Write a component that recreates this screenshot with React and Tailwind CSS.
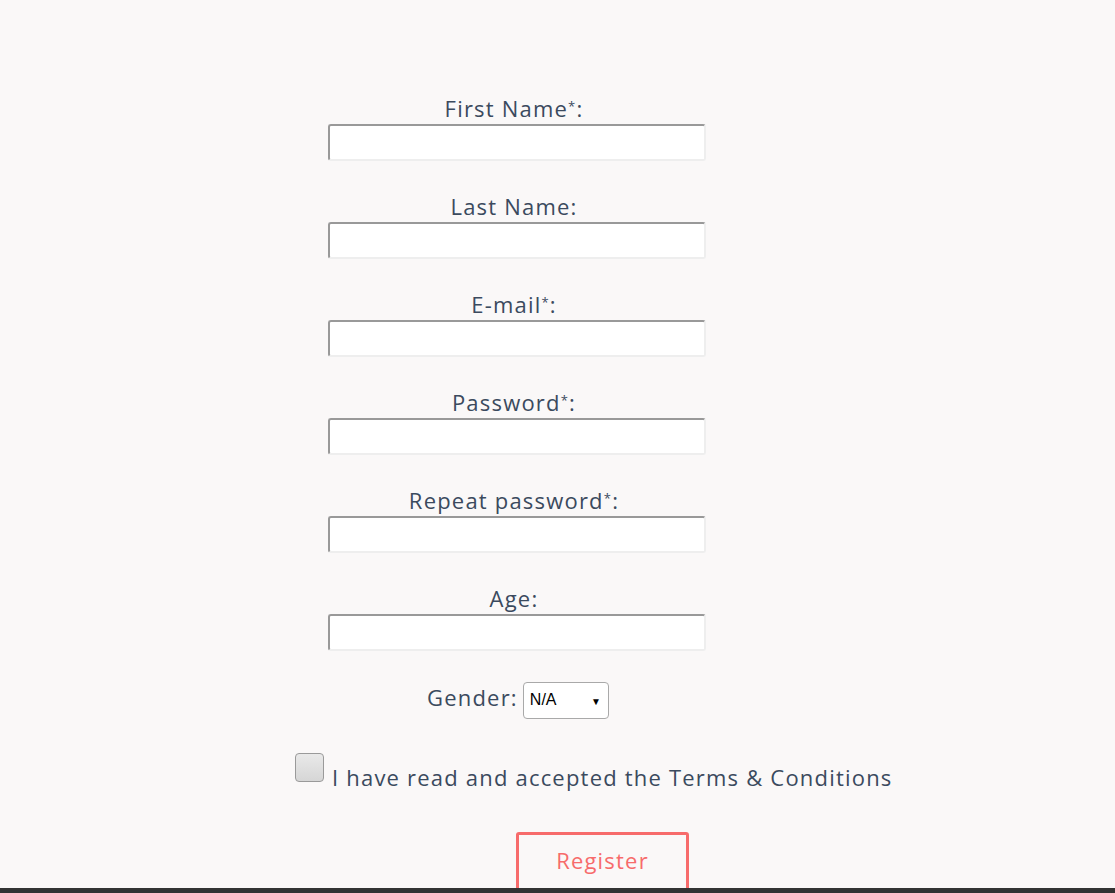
import React from "react";

const fields = [
  { label: "First Name", req: true },
  { label: "Last Name", req: false },
  { label: "E-mail", req: true },
  { label: "Password", req: true },
  { label: "Repeat password", req: true },
  { label: "Age", req: false },
];

function Field({ label, req }) {
  return (
    <div className="ml-[328px] w-[378px] mb-[31px]">
      <div className="h-[30px] text-center leading-[30px] text-[22px] text-[#3b4a5e]">
        <span className="relative left-[-3px] top-[-1px]">
          {label}
          {req && <sup className="text-[13px] top-[-6px]">*</sup>}:
        </span>
      </div>
      <input
        type="text"
        className="block w-[378px] h-[37px] bg-white rounded-[3px] border-2 border-t-[#999] border-l-[#999] border-b-[#eee] border-r-[#eee] outline-none"
      />
    </div>
  );
}

export default function App() {
  return (
    <div
      className="min-h-[893px] w-full bg-[#faf8f8] flex flex-col relative tracking-[1.2px]"
      style={{ fontFamily: '"Open Sans", "Liberation Sans", sans-serif' }}
    >
      <div className="pt-[94px]">
        {fields.map((f) => (
          <Field key={f.label} {...f} />
        ))}

        <div className="ml-[427px] flex items-center h-[36px]">
          <span className="text-[22px] text-[#3b4a5e] mr-[5px] leading-none mt-[-6px]">Gender:</span>
          <div
            className="relative w-[86px] h-[37px] bg-white border border-[#a9a9a9] rounded-[4px] flex items-center pl-[6px] text-[16px] text-black tracking-normal"
            style={{ fontFamily: '"Liberation Sans", Arial, sans-serif' }}
          >
            N/A
            <span className="absolute right-[7px] top-[11px] text-[10px]">▼</span>
          </div>
        </div>

        <div className="ml-[295px] mt-[35px] flex items-start">
          <div className="w-[29px] h-[29px] rounded-[4px] border border-[#9a9a9a] bg-gradient-to-b from-[#e9e9e9] to-[#d6d6d6] shrink-0" />
          <span className="ml-[8px] mt-[9px] text-[22px] leading-[30px] text-[#3b4a5e]">
            I have read and accepted the Terms &amp; Conditions
          </span>
        </div>

        <div className="ml-[516px] mt-[40px]">
          <button className="w-[173px] h-[60px] pb-[4px] border-[3px] border-[#f76b6b] rounded-[3px] text-[#f76b6b] text-[22px] bg-transparent tracking-[1.2px]">
            Register
          </button>
        </div>
      </div>
      <div className="absolute left-0 right-0 top-[888px] h-[5px] bg-[#333]" />
    </div>
  );
}
